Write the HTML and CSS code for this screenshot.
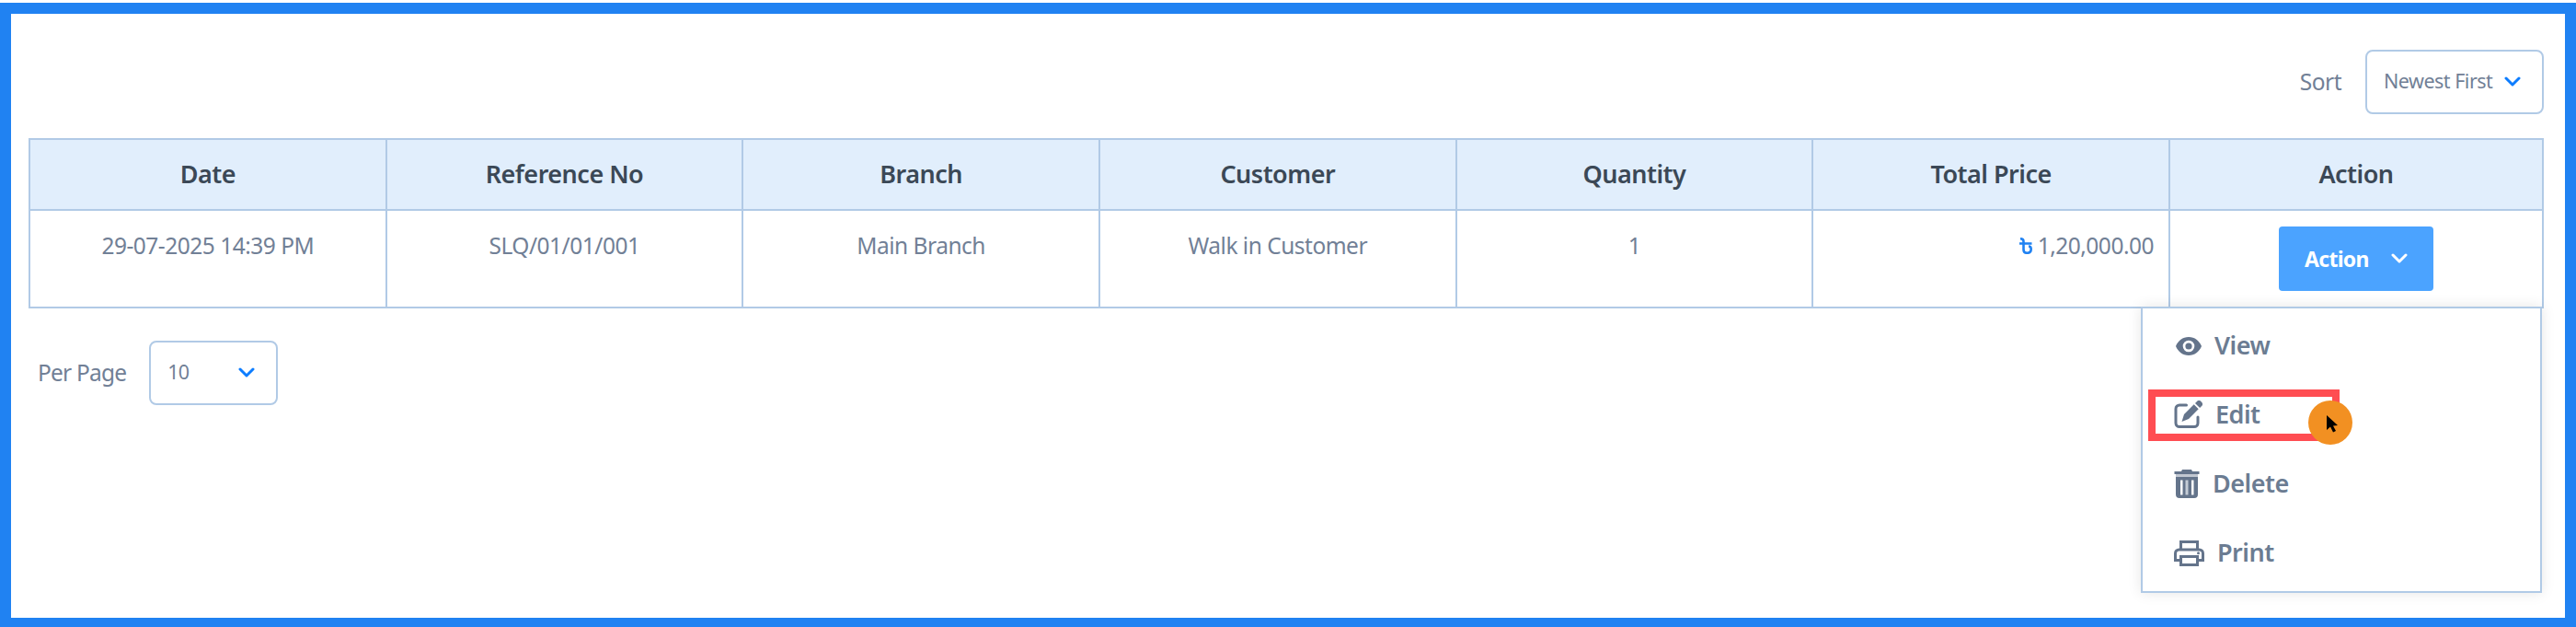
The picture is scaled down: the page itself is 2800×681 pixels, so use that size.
FILE: index.html
```html
<!DOCTYPE html>
<html lang="en">

<head>
    <meta charset="utf-8">
    <title>Quotation List</title>
    <link rel="stylesheet" href="styles.css">
</head>

<body>
    <div class="page">
        <div class="toolbar">
            <span class="label">Sort</span>
            <div class="select">
                <span>Newest First</span>
                <svg class="chevron" viewBox="0 0 18 12"><path d="M2 2l7 7 7-7" /></svg>
            </div>
        </div>

        <table class="list">
            <thead>
                <tr>
                    <th>Date</th>
                    <th>Reference No</th>
                    <th>Branch</th>
                    <th>Customer</th>
                    <th>Quantity</th>
                    <th>Total Price</th>
                    <th class="last">Action</th>
                </tr>
            </thead>
            <tbody>
                <tr>
                    <td>29-07-2025 14:39 PM</td>
                    <td>SLQ/01/01/001</td>
                    <td>Main Branch</td>
                    <td>Walk in Customer</td>
                    <td>1</td>
                    <td class="price">
                        <svg class="taka" viewBox="0 0 14 18"><path d="M1 1.3c2.600 0 3.500 1 3.500 3v8.700c0 2.600 1.300 3.800 3.700 3.800 2.700 0 4.500-1.700 4.500-4.300 0-2-1.300-3-2.700-3M0 6.500h13.500" /></svg>
                        1,20,000.00
                    </td>
                    <td class="last">
                        <div class="dropdown">
                            <button class="action-btn">
                                <span>Action</span>
                                <svg class="chevron" viewBox="0 0 18 12"><path d="M2 2l7 7 7-7" /></svg>
                            </button>
                            <div class="menu">
                                <div class="item view">
                                    <svg width="28" height="20" viewBox="0 0 28 20"><path fill-rule="evenodd" d="M14 0C7.500 0 2.500 4 0 10c2.500 6 7.500 10 14 10s11.500-4 14-10C25.500 4 20.500 0 14 0zm0 3.700a6.300 6.300 0 1 1 0 12.600 6.300 6.300 0 0 1 0-12.600z" /><circle cx="14" cy="10" r="3.600" /></svg>
                                    <span>View</span>
                                </div>
                                <div class="item edit">
                                    <svg width="31" height="31" viewBox="0 0 31 31"><path class="line" d="M13.500 5H6a4 4 0 0 0-4 4v15.500a4 4 0 0 0 4 4h16a4 4 0 0 0 4-4V18" /><path d="M21.700 4.300l5 5L16 20l-7.500 3L11 15z" /><path d="M23 3l2-2a3 3 0 0 1 4.300 0l.8.800a3 3 0 0 1 0 4.200l-2 2z" /></svg>
                                    <span>Edit</span>
                                </div>
                                <div class="item delete">
                                    <svg width="28" height="31" viewBox="0 0 28 31"><path d="M9 0h10l1 2h7.500v3H.5V2H8z" /><path opacity=".4" d="M2 5h24v3H2z" /><path fill-rule="evenodd" d="M2 8h24v19a4 4 0 0 1-4 4H6a4 4 0 0 1-4-4zm5 3.500v16h2.500v-16zm14.500 0H19v16h2.500z" /><path class="slot" d="M12.500 11.500h3v16h-3z" /></svg>
                                    <span>Delete</span>
                                </div>
                                <div class="item print">
                                    <svg width="33" height="28" viewBox="0 0 33 28"><path class="line" d="M7.500 10V1.500h18V10M7.500 21.500h-6V14a4 4 0 0 1 4-4h22a4 4 0 0 1 4 4v7.500h-6M7.500 17.500h18v9h-18z" /><circle cx="26.500" cy="13.700" r="1.500" /></svg>
                                    <span>Print</span>
                                </div>
                                <div class="highlight"></div>
                                <svg class="pointer" viewBox="0 0 48 48"><circle cx="24" cy="24" r="24" /><path d="M20 16l12 11-5 .5 3 5.500-3 1.500-3-6-4 3.500z" /></svg>
                            </div>
                        </div>
                    </td>
                </tr>
            </tbody>
        </table>

        <div class="paging">
            <span class="label">Per Page</span>
            <div class="select per-page">
                <span>10</span>
                <svg class="chevron" viewBox="0 0 18 12"><path d="M2 2l7 7 7-7" /></svg>
            </div>
        </div>
    </div>
</body>

</html>
```
FILE: styles.css
```css
* {
    box-sizing: border-box;
}

body {
    margin: 0;
    padding-top: 3px;
    background: #fff;
    color: #718096;
    font-family: "Noto Sans", "Open Sans", sans-serif;
    font-size: 24.500px;
    letter-spacing: -0.5px;
}

.page {
    height: 678px;
    padding: 39px 23px 0 19px;
    border: 12px solid #2082f2;
    border-bottom-width: 10px;
    overflow: hidden;
}

.toolbar,
.paging {
    display: flex;
    align-items: center;
}

.toolbar {
    justify-content: flex-end;
    gap: 26px;
}

.label {
    padding-bottom: 2px;
}

.select {
    display: flex;
    align-items: center;
    justify-content: space-between;
    width: 194px;
    height: 70px;
    padding: 0 23px 0 18px;
    border: 2px solid #b1cae6;
    border-radius: 8px;
    font-size: 21.500px;
    white-space: nowrap;
}

.select span {
    padding-bottom: 3px;
}

.chevron {
    width: 18px;
    height: 12px;
    fill: none;
    stroke: #0d7dff;
    stroke-width: 3;
    stroke-linecap: round;
    stroke-linejoin: round;
}

.list {
    width: 2734px;
    margin-top: 26px;
    border-collapse: collapse;
    table-layout: fixed;
}

.list th,
.list td {
    padding: 0;
    border: 2px solid #b1cae6;
    text-align: center;
}

.list th {
    height: 77px;
    padding-bottom: 3px;
    background: #e1eefc;
    color: #3b4856;
    font-size: 27px;
    font-weight: 600;
}

.list td {
    height: 106px;
    padding-top: 21px;
    line-height: 34px;
    vertical-align: top;
}

.list .last {
    width: 406px;
}

.list td.last {
    padding-top: 17px;
}

.list td.price {
    padding-right: 16px;
    text-align: right;
}

.taka {
    width: 14px;
    height: 18px;
    fill: none;
    stroke: #2082f2;
    stroke-width: 2.600;
}

.dropdown {
    position: relative;
}

.action-btn {
    display: flex;
    align-items: center;
    justify-content: space-between;
    width: 168px;
    height: 70px;
    margin: 0 auto;
    padding: 0 28px;
    border: 0;
    border-radius: 4px;
    background: #4ba3ff;
    color: #fff;
    font: 700 23px "Noto Sans", "Open Sans", sans-serif;
    letter-spacing: -0.7px;
}

.action-btn span {
    padding-bottom: 1px;
}

.action-btn .chevron {
    stroke: #fff;
}

/* opens under the row, aligned to the right edge of the table */
.menu {
    position: absolute;
    top: 87px;
    right: 0;
    width: 436px;
    height: 311px;
    padding-top: 4px;
    border: 2px solid #b1cae6;
    background: #fff;
    box-shadow: 0 0 14px rgba(0, 0, 0, 0.1);
    font-size: 27px;
    font-weight: 600;
}

.item {
    display: flex;
    align-items: center;
    height: 75px;
    padding-left: 34px;
    gap: 14px;
    color: #6b7c92;
}

.view {
    padding-left: 36px;
}

.item span {
    padding-bottom: 3px;
}

.item svg {
    margin-bottom: 2px;
    fill: #64748b;
}

.item .line {
    fill: none;
    stroke: #64748b;
    stroke-width: 3;
    stroke-linecap: round;
}

.item .slot {
    fill: #c5ccd6;
}

.highlight {
    position: absolute;
    left: 6px;
    top: 88px;
    width: 208px;
    height: 56px;
    border: 8px solid #ff4d52;
}

.menu .pointer {
    position: absolute;
    left: 180px;
    top: 100px;
    width: 48px;
    height: 48px;
}

.pointer circle {
    fill: #f29022;
}

.paging {
    gap: 25px;
    margin-top: 35px;
    padding-left: 10px;
    letter-spacing: -0.8px;
}

.per-page {
    width: 140px;
}
```
